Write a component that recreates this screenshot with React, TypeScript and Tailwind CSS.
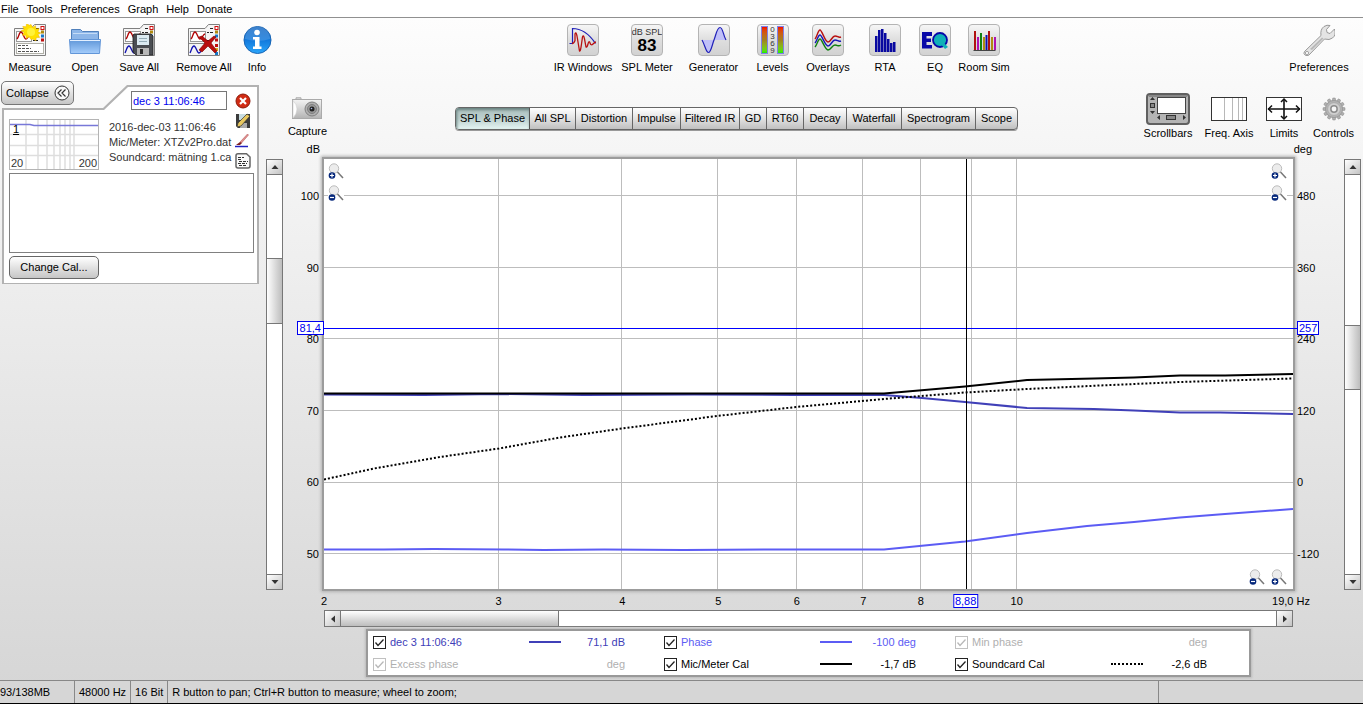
import React from "react";

type Kid = { children?: React.ReactNode };

/* ---------- toolbar icons ---------- */

function SheetArt() {
  return (
    <>
      <path d="M0.500 31.500V4.500H17L20.500 0.500H31.500V31.500Z" fill="#f6f6f6" stroke="#808080" />
      <rect x="2.500" y="7.500" width="15" height="10" fill="#fff" stroke="#999" />
      <path d="M3 15C5 13 5 8 7 8s3 7 5 7 3-5 5-5" fill="none" stroke="#b00000" strokeWidth="1.300" />
      <path d="M22 4.500h3M19 8.500h2M22 8.500h3M19 16.500h5" stroke="#222" />
      <rect x="27" y="2.500" width="3" height="3" fill="#fff" stroke="#d01010" />
      <rect x="27" y="6.500" width="3" height="3" fill="#b08a10" />
      <rect x="27" y="10.500" width="3" height="3" fill="#1878c8" />
      <rect x="27" y="14.500" width="3" height="3" fill="#c01010" />
    </>
  );
}

function TwoSheetArt() {
  return (
    <>
      <SheetArt />
      <rect x="2" y="18" width="29" height="13" fill="#f4f4f4" />
      <path d="M1 19.500h18" stroke="#888" />
      <path d="M2 29C4 25 4 22 6 22s3 7 5 7 3-5 5-6" fill="none" stroke="#1010b0" strokeWidth="1.300" />
      <rect x="27" y="20" width="3" height="3" fill="#c01010" />
      <rect x="27" y="24" width="3" height="3" fill="#d8b020" />
      <rect x="27" y="28" width="3" height="3" fill="#1878c8" />
    </>
  );
}

const svg32 = "block h-8 w-8";

function MeasureIcon() {
  return (
    <svg className={svg32} viewBox="0 0 32 32">
      <SheetArt />
      <rect x="2.500" y="19.500" width="27" height="10" fill="#fff" stroke="#b0b0a8" />
      <path d="M4 21.500h10M4 24.500h13M4 27.500h21" stroke="#555" strokeDasharray="3 1" />
      <path
        d="M17 0.500l1.700 3 2.800-1.800.3 3.300 3.400-.3-1.400 3 3 1.300-2.900 1.500 1.700 2.900-3.400 0-.3 3.300-3-1.700L17 15.500l-1.800-2.700-3 1.700-.3-3.300-3.400 0 1.600-2.900-2.900-1.500 3-1.300-1.400-3 3.400.3.3-3.300 2.800 1.800z"
        fill="#ffe000"
        stroke="#f2b800"
        strokeWidth=".6"
      />
      <circle cx="17" cy="8" r="4" fill="#fff23a" />
    </svg>
  );
}

function OpenIcon() {
  return (
    <svg className={svg32} viewBox="0 0 32 32">
      <defs>
        <linearGradient id="folderFront" x1="0" y1="0" x2="0" y2="1">
          <stop offset="0" stopColor="#5f96d8" />
          <stop offset="1" stopColor="#a5cdfb" />
        </linearGradient>
      </defs>
      <path d="M2.500 18V5.500h9l2 2h16V18z" fill="#8db6e8" stroke="#5080bb" />
      <path d="M4 9.500h24" stroke="#c5dcf6" />
      <path d="M0.500 15.500h31L30.500 29.500H1.500z" fill="url(#folderFront)" stroke="#6296d8" />
      <path d="M1 16.500h30" stroke="#e4f0ff" />
    </svg>
  );
}

function SaveAllIcon() {
  return (
    <svg className={svg32} viewBox="0 0 32 32">
      <TwoSheetArt />
      <path d="M11 10h17l2 2v19H13l-3-3V11z" fill="#4a4d52" stroke="#222" strokeWidth=".8" />
      <rect x="14" y="11" width="12" height="10" fill="#dcebf2" />
      <path d="M16 14.500h8M16 17.500h8" stroke="#95adb8" />
      <rect x="14" y="24" width="12" height="7" fill="#b8b8b8" />
      <rect x="17" y="25" width="3" height="5" fill="#2c2c2c" />
    </svg>
  );
}

function RemoveAllIcon() {
  return (
    <svg className={svg32} viewBox="0 0 32 32">
      <TwoSheetArt />
      <path d="M11 13l3-1 6 5 6-5 2 1-5 6 6 8-2 2-7-7-6 6-3-2 6-7z" fill="#b80d0d" stroke="#7c0000" strokeWidth=".6" />
    </svg>
  );
}

function InfoIcon() {
  return (
    <svg className={svg32} viewBox="0 0 32 32">
      <defs>
        <linearGradient id="infoBall" x1="0" y1="0" x2="0" y2="1">
          <stop offset="0" stopColor="#1c6cc4" />
          <stop offset=".5" stopColor="#1279dc" />
          <stop offset="1" stopColor="#2ba6fa" />
        </linearGradient>
      </defs>
      <circle cx="16.500" cy="16" r="13.500" fill="url(#infoBall)" stroke="#1764b4" />
      <path d="M4 15a12 12 0 0 1 25 0q-12 4-25 0z" fill="#fff" opacity=".15" />
      <circle cx="16" cy="8.500" r="2.800" fill="#fff" />
      <path d="M12 13h6.500v9.500h2V25H12v-2.500h2v-7h-2z" fill="#fff" />
    </svg>
  );
}

function Tile({ children }: Kid) {
  return (
    <span className="flex h-8 w-8 flex-col items-center justify-center overflow-hidden rounded-[4px] border border-[#b4b4b4] bg-linear-to-b from-[#f6f6f6] via-[#dedede] to-[#d2d2d2]">
      {children}
    </span>
  );
}

const tileSvg = "block h-[30px] w-[30px]";

function IrIcon() {
  return (
    <Tile>
      <svg className={tileSvg} viewBox="0 0 30 30" fill="none">
        <path d="M1.500 18.500h3V3.500q13 0 23 15" stroke="#2020b8" strokeWidth="1.200" />
        <path d="M4 18.500q2 0 3-3V9q1-3 2 2l2.500 15q1 1 2-7l1-7q1-3 2 2l1.500 8q1 1 2-3t2-1 3 1 3-2" stroke="#b81010" strokeWidth="1.300" />
      </svg>
    </Tile>
  );
}

function SplIcon() {
  return (
    <Tile>
      <span className="text-[9px] leading-[10px] whitespace-nowrap text-[#333]">dB SPL</span>
      <span className="text-[17px] leading-[17px] font-bold text-black">83</span>
    </Tile>
  );
}

function GeneratorIcon() {
  return (
    <Tile>
      <svg className={tileSvg} viewBox="0 0 30 30">
        <path d="M3 15C6 20 7 27.500 9.500 27.500S13 20 15 15S18 2.500 21 2.500S24 10 27 15z" fill="#c0c0f8" />
        <path d="M3 15C6 20 7 27.500 9.500 27.500S13 20 15 15S18 2.500 21 2.500S24 10 27 15" fill="none" stroke="#2020b8" strokeWidth="1.200" />
      </svg>
    </Tile>
  );
}

const bar = "w-[7px] border border-[#8080e8] bg-linear-to-b from-[#f00000] via-[#a08020] to-[#00f000]";

function LevelsIcon() {
  return (
    <Tile>
      <span className="flex h-[28px] w-[23px] justify-between">
        <span className={bar} />
        <span className="flex flex-col items-center text-[8px] leading-[7px] text-[#333]">
          <span>0</span>
          <span>3</span>
          <span>6</span>
          <span>9</span>
        </span>
        <span className={bar} />
      </span>
    </Tile>
  );
}

function OverlaysIcon() {
  return (
    <Tile>
      <svg className={tileSvg} viewBox="0 0 30 30" fill="none" strokeWidth="1.400">
        <path d="M2 14C4 12 5 5 7 5s5 12 8 12 4-6 7-6 3 2 6 1" stroke="#b81010" />
        <path d="M2 18C4 16 5 10 7 10s5 11 8 11 4-6 7-6 3 2 6 1" stroke="#1818b8" />
        <path d="M2 22C4 20 5 14 7 14s5 11 8 11 4-5 7-5 3 2 6 0" stroke="#108010" />
      </svg>
    </Tile>
  );
}

function RtaIcon() {
  return (
    <Tile>
      <svg className={tileSvg} viewBox="0 0 30 30">
        <path
          d="M5 27V11h2.500v16zM8 27V5h2.500v22zM11 27V4h2.500v23zM14 27V8h2.500v19zM17 27V14h2.500v13zM20 27V18h2.500v9zM23 27V17h2.500v10z"
          fill="#0808a0"
        />
      </svg>
    </Tile>
  );
}

function EqIcon() {
  return (
    <Tile>
      <svg className={tileSvg} viewBox="0 0 30 30">
        <path d="M2 7h10v4H6.500v2.500H11v3.500H6.500V20H12v3.500H2z" fill="#0808a8" />
        <circle cx="20" cy="15" r="7" fill="#10b0b8" stroke="#0808a8" strokeWidth="1.800" />
        <path d="M20 18l3-1 5 5-3 2z" fill="#10b0b8" />
      </svg>
    </Tile>
  );
}

function RoomIcon() {
  return (
    <Tile>
      <svg className={tileSvg} viewBox="0 0 30 30">
        <path d="M5 25V6h2v19zM19 25V6h2v19z" fill="#b01010" />
        <path d="M8 25V12h2v13zM25 25V12h2v13z" fill="#b010b0" />
        <path d="M11 25V8h2v17z" fill="#108010" />
        <path d="M14 25V12h2v13zM22 25V12h2v13z" fill="#b08a10" />
        <path d="M16.500 25V10h2v15z" fill="#1010b0" />
        <path d="M4.500 25.500h22" stroke="#444" />
      </svg>
    </Tile>
  );
}

function WrenchIcon() {
  return (
    <svg className={svg32} viewBox="0 0 32 32">
      <path
        d="M1.500 27.500L18 11.500q-1-6 3-9 3-2 6-1l-3.500 4 .5 3 3 1L31.500 5q2 6-2 9-3 2.500-8 1L6 31q-2 1.500-4 0t-.5-3.500z"
        fill="#e4e4e4"
        stroke="#909090"
        strokeWidth=".9"
      />
      <path d="M7 25L19 13.500l1.500 1L9 26z" fill="#b8b8b8" />
      <circle cx="4" cy="29" r="1.600" fill="#fff" stroke="#909090" strokeWidth=".8" />
    </svg>
  );
}

function Tool({ label, width, children }: Kid & { label: string; width: string }) {
  return (
    <button type="button" className={`flex flex-col items-center gap-1 whitespace-nowrap ${width}`}>
      {children}
      <span className="leading-[14px]">{label}</span>
    </button>
  );
}

/* ---------- scroll bars ---------- */

const grip = "flex shrink-0 items-center justify-center bg-linear-to-br from-white to-[#c4c4c4]";

function Arrow({ d }: { d: string }) {
  return (
    <svg className="block h-[8px] w-[8px]" viewBox="0 0 8 8">
      <path d={d} fill="#333" />
    </svg>
  );
}

function VScroll({ before, after }: { before: number; after: number }) {
  return (
    <div className="flex w-[17px] flex-1 flex-col border border-[#777] bg-white">
      <button type="button" aria-label="Scroll up" className={`${grip} h-[15px] border-b border-[#777]`}>
        <Arrow d="M0.500 6L4 2l3.500 4z" />
      </button>
      <div className="flex flex-1 flex-col">
        <div className="basis-0" style={{ flexGrow: before }} />
        <div className="basis-0 border-y border-[#777] bg-linear-to-r from-white to-[#bdbdbd]" style={{ flexGrow: 64 }} />
        <div className="basis-0" style={{ flexGrow: after }} />
      </div>
      <button type="button" aria-label="Scroll down" className={`${grip} h-[15px] border-t border-[#777]`}>
        <Arrow d="M0.500 2L4 6l3.500-4z" />
      </button>
    </div>
  );
}

function HScroll() {
  return (
    <div className="flex h-[17px] border border-[#777] bg-white">
      <button type="button" aria-label="Scroll left" className={`${grip} w-[16px] border-r border-[#777]`}>
        <Arrow d="M6 0.500L2 4l4 3.500z" />
      </button>
      <div className="flex flex-1">
        <div className="w-[23.300%] border-r border-[#777] bg-linear-to-b from-white to-[#bdbdbd]" />
      </div>
      <button type="button" aria-label="Scroll right" className={`${grip} w-[16px] border-l border-[#777]`}>
        <Arrow d="M2 0.500L6 4 2 7.500z" />
      </button>
    </div>
  );
}

/* ---------- measurement panel ---------- */

function Thumb() {
  return (
    <div className="relative h-[51px] w-[90px] border border-[#b4b4b4] bg-white">
      <svg className="block h-full w-full" viewBox="0 0 88 49" preserveAspectRatio="none">
        <path
          d="M16 0V49M28 0V49M37 0V49M44 0V49M50 0V49M55 0V49M60 0V49M64 0V49M0 14.500H88M0 25.500H88M0 35.500H88"
          stroke="#dedede"
          strokeWidth="1.500"
        />
        <path d="M0 4.500H20L24 5.500H88" fill="none" stroke="#7878d8" strokeWidth="1.500" />
      </svg>
      <span className="absolute top-[3px] left-[3px] leading-[12px] text-black underline">1</span>
      <span className="absolute bottom-0 left-px bg-white leading-[12px] text-[#333]">20</span>
      <span className="absolute right-px bottom-0 bg-white leading-[12px] text-[#333]">200</span>
    </div>
  );
}

const svg16 = "block h-4 w-4";

function Panel() {
  return (
    <section className="relative w-[260px] pb-[5px]">
      <div className="absolute top-[5px] right-px bottom-0 left-[2px] bg-[#b2b2b2] [clip-path:polygon(0_23px,101px_23px,125px_0,100%_0,100%_100%,0_100%)]" />
      <div className="absolute top-[7px] right-[3px] bottom-px left-[4px] bg-white [clip-path:polygon(0_23px,100px_23px,124px_0,100%_0,100%_100%,0_100%)]" />
      <div className="relative flex">
        <div className="w-[233px]">
          <div className="flex justify-between pt-px pr-[6px] pl-px">
            <button
              type="button"
              className="flex h-6 w-[73px] items-center gap-[5px] rounded-[5px] border border-[#777] bg-linear-to-b from-white to-[#c6c6c6] pl-1"
            >
              Collapse
              <svg className="h-4 w-4" viewBox="0 0 16 16" fill="none" stroke="#333">
                <circle cx="8" cy="8" r="7" fill="#f8f8f8" />
                <path d="M7.500 4.500L4 8l3.500 3.500M11.500 4.500L8 8l3.500 3.500" strokeWidth="1.200" />
              </svg>
            </button>
            <input
              aria-label="Measurement name"
              defaultValue="dec 3 11:06:46"
              className="mt-[10px] h-[19px] w-24 border border-[#777] bg-white px-px text-[#0000f0] outline-none"
            />
          </div>
          <div className="flex gap-[10px] pt-[9px] pl-[9px]">
            <Thumb />
            <div className="w-[124px] overflow-hidden pt-px leading-[15px] whitespace-nowrap text-[#333]">
              <p>2016-dec-03 11:06:46</p>
              <p>Mic/Meter: XTZv2Pro.dat</p>
              <p>Soundcard: mätning 1.ca</p>
            </div>
          </div>
        </div>
        <div className="flex flex-col gap-1 pt-[13px] pl-0.5">
          <button type="button" aria-label="Remove">
            <svg className={svg16} viewBox="0 0 16 16">
              <circle cx="8" cy="8" r="7" fill="#d02c14" stroke="#8e1a0a" />
              <path d="M5 5l6 6M11 5l-6 6" stroke="#fff" strokeWidth="2.200" />
            </svg>
          </button>
          <button type="button" aria-label="Save as">
            <svg className={svg16} viewBox="0 0 16 16">
              <path d="M1 1h14v14H3l-2-2z" fill="#3c3c3c" />
              <path d="M4 1h7v6H4z" fill="#c8dce0" />
              <path d="M5 10h7v5H5z" fill="#aaa" />
              <path d="M2 14l1-4 9-9 3 2-9 10z" fill="#e8c860" stroke="#333" strokeWidth=".7" />
            </svg>
          </button>
          <button type="button" aria-label="Trace colour">
            <svg className={svg16} viewBox="0 0 16 16">
              <path d="M5 9L12.500 1l1 1-7 8z" fill="#e09090" stroke="#b86060" strokeWidth=".6" />
              <path d="M1 12l4-3 2 1-2 2z" fill="#802020" />
              <path d="M0 13.500h13" stroke="#2020c0" strokeWidth="1.500" />
            </svg>
          </button>
          <button type="button" aria-label="Notes">
            <svg className={svg16} viewBox="0 0 16 16">
              <path d="M3 .8h8.500L15 4v9q0 2-2 2H3q-2 0-2-2V2.800q0-2 2-2z" fill="#fafafa" stroke="#666" strokeWidth="1.500" />
              <path d="M3 4.500h6M3 6.500h4M4 8.500h9M3 10.500h9M4 12.500h8" stroke="#333" strokeDasharray="3 1" />
            </svg>
          </button>
        </div>
      </div>
      <div className="relative pt-[3px] pr-[6px] pl-[9px]">
        <textarea aria-label="Notes" className="block h-20 w-full resize-none border border-[#808080] bg-white outline-none" />
        <button
          type="button"
          className="mt-[3px] h-[23px] w-[90px] rounded-[5px] border border-[#666] bg-linear-to-b from-white to-[#c6c6c6]"
        >
          Change Cal...
        </button>
      </div>
    </section>
  );
}

/* ---------- graph header ---------- */

const tabs = [
  { name: "SPL & Phase", width: "w-[74px]" },
  { name: "All SPL", width: "w-[46px]" },
  { name: "Distortion", width: "w-[57px]" },
  { name: "Impulse", width: "w-[48px]" },
  { name: "Filtered IR", width: "w-[59px]" },
  { name: "GD", width: "w-[27px]" },
  { name: "RT60", width: "w-[37px]" },
  { name: "Decay", width: "w-[43px]" },
  { name: "Waterfall", width: "w-[55px]" },
  { name: "Spectrogram", width: "w-[74px]" },
  { name: "Scope", width: "w-[41px]" },
];

function Tabs() {
  return (
    <nav className="mt-[27px] flex h-[23px] overflow-hidden rounded-[4px] border border-[#666] bg-linear-to-b from-white via-[#e2e2e2] to-[#c0c0c0] shadow-[0_1px_0_#999]">
      {tabs.map((t, i) => (
        <button
          key={t.name}
          type="button"
          className={`border-r whitespace-nowrap ${t.width} ${
            i === 0
              ? "border-[#555] bg-linear-to-b from-[#aec0bf] via-[#bccfce] to-[#e4f4f2] shadow-[inset_1px_2px_3px_#66807e]"
              : "border-[#666] last:border-r-0"
          }`}
        >
          {t.name}
        </button>
      ))}
    </nav>
  );
}

function CameraIcon() {
  return (
    <svg className="block h-6 w-8" viewBox="0 0 32 24">
      <defs>
        <linearGradient id="camBody" x1="0" y1="0" x2="0" y2="1">
          <stop offset="0" stopColor="#f4f4f4" />
          <stop offset="1" stopColor="#b4b4b4" />
        </linearGradient>
      </defs>
      <path d="M5 2.500V.8h5v1.700" fill="#ddd" stroke="#aaa" />
      <rect x="1.500" y="2.500" width="29" height="19" fill="url(#camBody)" stroke="#aaa" />
      <path d="M2 3.500q4 4 4 8.500t-4 9z" fill="#fff" stroke="#ccc" strokeWidth=".6" />
      <circle cx="21" cy="12" r="7" fill="#b0b0b0" stroke="#808080" />
      <circle cx="21" cy="12" r="4.500" fill="#989898" stroke="#808080" />
      <circle cx="21" cy="12" r="2.500" fill="#222" />
      <circle cx="20.500" cy="11.500" r=".8" fill="#a8b8e8" />
    </svg>
  );
}

function ScrollbarsIcon() {
  return (
    <svg className="block h-8 w-11" viewBox="0 0 44 32">
      <rect x="1" y="1" width="42" height="30" rx="3" fill="#b4b4b4" stroke="#606060" strokeWidth="2" />
      <path d="M3 3h38" stroke="#888" strokeWidth="2" />
      <rect x="11.500" y="4.500" width="28" height="16" fill="#fff" stroke="#444" />
      <path d="M4 7l2.500-3L9 7zM4 18l2.500 3L9 18zM14 22v5l-3-2.500zM37 22v5l3-2.500z" fill="#333" />
      <rect x="4.500" y="10.500" width="4" height="4" fill="#888" stroke="#333" />
      <rect x="20.500" y="22.500" width="9" height="4" fill="#888" stroke="#333" />
    </svg>
  );
}

function FreqIcon() {
  return (
    <svg className="block h-8 w-9" viewBox="0 0 36 32">
      <rect x=".5" y="4.500" width="35" height="23" fill="#fff" stroke="#333" />
      <path d="M13.500 5v22M21.500 5v22M27.500 5v22M31.500 5v22" stroke="#b8b8b8" />
    </svg>
  );
}

function LimitsIcon() {
  return (
    <svg className="block h-8 w-9" viewBox="0 0 36 32" fill="none" stroke="#111">
      <rect x=".5" y="4.500" width="35" height="23" fill="#fff" stroke="#333" />
      <path d="M2 16h32M18 6v20" strokeWidth="1.600" />
      <path d="M6 12.500L2.500 16 6 19.500M30 12.500l3.500 3.500-3.500 3.500M15 9l3-3 3 3M15 23l3 3 3-3" strokeWidth="1.500" />
    </svg>
  );
}

function GearIcon() {
  const teeth = Array.from({ length: 12 }, (_, i) => i * 30);
  return (
    <svg className="block h-8 w-6" viewBox="0 0 24 32">
      <g transform="translate(12 16)">
        {teeth.map((a) => (
          <path key={a} d="M-1.800 -8L-1.200 -11H1.200L1.800 -8z" fill="#b0b0b0" stroke="#888" strokeWidth=".5" transform={`rotate(${a})`} />
        ))}
        <circle r="8.500" fill="#b4b4b4" stroke="#909090" strokeWidth=".6" />
        <circle r="6.300" fill="#d0d0d0" stroke="#a0a0a0" strokeWidth=".6" />
        <circle r="3.900" fill="#8c8c8c" />
        <circle r="2.400" fill="#f6f6f6" />
      </g>
    </svg>
  );
}

function ViewButton({ label, width, children }: Kid & { label: string; width: string }) {
  return (
    <button type="button" className={`flex flex-col items-center gap-px pt-[13px] whitespace-nowrap ${width}`}>
      {children}
      <span className="leading-[14px]">{label}</span>
    </button>
  );
}

/* ---------- plot ---------- */

const F_MIN = 2;
const F_MAX = 19;
const pos = (f: number) => (Math.log(f / F_MIN) / Math.log(F_MAX / F_MIN)) * 100;

function ZoomButton({ plus }: { plus?: boolean }) {
  return (
    <button type="button" aria-label={plus ? "Zoom in" : "Zoom out"} className="block bg-white">
      <svg className={svg16} viewBox="0 0 16 16">
        <circle cx="6" cy="5.500" r="4.700" fill="#ececec" stroke="#bcbcbc" />
        <path d="M9.500 9l5.500 6" stroke="#777" strokeWidth="1.500" />
        <circle cx="4" cy="12.500" r="3.300" fill="#06287c" />
        <path d={plus ? "M2 12.500h4M4 10.500v4" : "M2 12.500h4"} stroke="#fff" strokeWidth="1.200" />
      </svg>
    </button>
  );
}

const line = { fill: "none", vectorEffect: "non-scaling-stroke" as const, strokeWidth: 2 };

function Plot() {
  return (
    <div className="relative min-h-[300px] flex-1 bg-white shadow-[0_0_0_2px_#9c9c9c,0_0_3px_3px_#b0b0b0]">
      <svg className="absolute inset-0 h-full w-full" viewBox="0 0 969 430" preserveAspectRatio="none">
        <g stroke="#bdbdbd" fill="none" shapeRendering="crispEdges">
          <path
            d="M0 36.500H969M0 108.500H969M0 179.500H969M0 251.500H969M0 323.500H969M0 394.500H969M174.500 0V430M297.500 0V430M393.500 0V430M472.500 0V430M538.500 0V430M596.500 0V430M647.500 0V430M692.500 0V430"
            vectorEffect="non-scaling-stroke"
          />
        </g>
        <path {...line} stroke="#4040b8" d="M0 235.500L100 236L175 235L260 236L370 235.500L470 236L560 236L598 239L641 243L703 249L770 250L810 251.500L856 253.500H896L969 255" />
        <path {...line} stroke="#5c5cf4" d="M0 390.500H60L110 390L180 390.500L220 391L280 390.500L360 391L450 390.500H560L641 382.500L703 374L763 367L810 363L856 358.500L901 355L969 350" />
        <path {...line} stroke="#000" d="M0 234.500H560L641 227.500L703 221L770 219.500L810 218.500L856 216.500H901L969 215" />
        <path {...line} stroke="#000" strokeDasharray="2 2" d="M0 320.500L50 309.500L116 298L175 289.500L236 278.500L298 269.500L393 257L472 248L560 240L641 233.500L703 230L776 226.500L856 223L969 219.500" />
      </svg>
      <div className="absolute top-[39.300%] -right-1 left-0 border-t border-[#0000ff]" />
      <div className="absolute inset-y-0 border-l border-black" style={{ left: `${pos(8.88)}%` }} />
      <div className="absolute top-1 left-1 flex flex-col gap-[6px]">
        <ZoomButton plus />
        <ZoomButton />
      </div>
      <div className="absolute top-1 right-[6px] flex flex-col gap-[6px]">
        <ZoomButton plus />
        <ZoomButton />
      </div>
      <div className="absolute right-[6px] bottom-1 flex gap-[6px]">
        <ZoomButton />
        <ZoomButton plus />
      </div>
      <span className="absolute top-[39.300%] right-full flex h-[14px] -translate-y-1/2 items-center border border-[#0000f0] bg-white px-0.5 text-[#0000f0]">
        81,4
      </span>
      <span className="absolute top-[39.300%] left-full ml-1 flex h-[14px] -translate-y-1/2 items-center border border-[#0000f0] bg-white px-px text-[#0000f0]">
        257
      </span>
    </div>
  );
}

function YAxis({ values, side }: { values: string[]; side: string }) {
  return (
    <div className={`flex flex-col justify-between pt-[30px] pb-[29px] leading-[14px] ${side}`}>
      {values.map((v) => (
        <span key={v}>{v}</span>
      ))}
    </div>
  );
}

function XAxis() {
  return (
    <div className="relative h-[21px] leading-[14px]">
      {[2, 3, 4, 5, 6, 7, 8, 10].map((f) => (
        <span key={f} className="absolute top-[5px] -translate-x-1/2" style={{ left: `${pos(f)}%` }}>
          {f}
        </span>
      ))}
      <span
        className="absolute top-[5px] flex h-[14px] -translate-x-1/2 items-center border border-[#0000f0] bg-white px-px text-[#0000f0]"
        style={{ left: `${pos(8.88)}%` }}
      >
        8,88
      </span>
      <span className="absolute top-[5px] -right-[17px]">19,0 Hz</span>
    </div>
  );
}

/* ---------- legend ---------- */

type Trace = { name: string; value: string; text: string; stroke?: string; off?: boolean };

const traces: Trace[] = [
  { name: "dec 3 11:06:46", value: "71,1 dB", text: "text-[#4040b8]", stroke: "border-t-2 border-solid border-[#4040b8]" },
  { name: "Phase", value: "-100 deg", text: "text-[#5c5cf4]", stroke: "border-t-2 border-solid border-[#5c5cf4]" },
  { name: "Min phase", value: "deg", text: "text-[#b0b0b0]", off: true },
  { name: "Excess phase", value: "deg", text: "text-[#b0b0b0]", off: true },
  { name: "Mic/Meter Cal", value: "-1,7 dB", text: "text-black", stroke: "border-t-2 border-solid border-black" },
  { name: "Soundcard Cal", value: "-2,6 dB", text: "text-black", stroke: "border-t-2 border-dotted border-black" },
];

function Legend() {
  return (
    <div className="mx-auto grid w-full max-w-[881px] grid-cols-3 bg-white pr-[3px] pl-[5px] shadow-[0_0_0_2px_#999,0_0_2px_3px_#bbb]">
      {traces.map((t) => (
        <div key={t.name} className={`flex h-[22px] items-center ${t.text}`}>
          <label className="flex w-[156px] items-center gap-1">
            <span className="relative h-[13px] w-[13px]">
              <input
                type="checkbox"
                defaultChecked
                disabled={t.off}
                className="peer block h-[13px] w-[13px] appearance-none border border-[#222] bg-white disabled:border-[#c0c0c0]"
              />
              <svg
                className={`pointer-events-none absolute inset-0 hidden h-[13px] w-[13px] peer-checked:block ${t.off ? "text-[#b8b8b8]" : "text-[#222]"}`}
                viewBox="0 0 13 13"
                fill="none"
                stroke="currentColor"
                strokeWidth="1.300"
              >
                <path d="M2.500 6.500L5 9.500l5.500-6" />
              </svg>
            </span>
            {t.name}
          </label>
          <span className={`w-8 ${t.stroke ?? ""}`} />
          <span className="w-16 text-right">{t.value}</span>
        </div>
      ))}
    </div>
  );
}

/* ---------- page ---------- */

const menus = ["File", "Tools", "Preferences", "Graph", "Help", "Donate"];

export default function App() {
  return (
    <div className="flex min-h-screen flex-col bg-linear-to-b from-[#fefefe] to-[#d5d5d5] font-['Liberation_Sans',Arial,sans-serif] text-[11px] text-black">
      <nav className="flex h-[18px] items-center gap-2 border-b border-[#909090] bg-white pl-px">
        {menus.map((m) => (
          <button key={m} type="button" className="leading-[14px]">
            {m}
          </button>
        ))}
      </nav>

      <header className="flex justify-between pt-[6px] pr-[10px] pb-[6px]">
        <div className="flex">
          <Tool label="Measure" width="w-[60px]"><MeasureIcon /></Tool>
          <Tool label="Open" width="w-[50px]"><OpenIcon /></Tool>
          <Tool label="Save All" width="w-[58px]"><SaveAllIcon /></Tool>
          <Tool label="Remove All" width="w-[72px]"><RemoveAllIcon /></Tool>
          <Tool label="Info" width="w-[34px]"><InfoIcon /></Tool>
        </div>
        <div className="flex pl-[3px]">
          <Tool label="IR Windows" width="w-[62px]"><IrIcon /></Tool>
          <Tool label="SPL Meter" width="w-[66px]"><SplIcon /></Tool>
          <Tool label="Generator" width="w-[67px]"><GeneratorIcon /></Tool>
          <Tool label="Levels" width="w-[51px]"><LevelsIcon /></Tool>
          <Tool label="Overlays" width="w-[60px]"><OverlaysIcon /></Tool>
          <Tool label="RTA" width="w-[54px]"><RtaIcon /></Tool>
          <Tool label="EQ" width="w-[46px]"><EqIcon /></Tool>
          <Tool label="Room Sim" width="w-[52px]"><RoomIcon /></Tool>
        </div>
        <Tool label="Preferences" width="w-[68px]"><WrenchIcon /></Tool>
      </header>

      <main className="flex flex-1">
        <aside className="flex shrink-0 gap-[6px]">
          <div>
            <Panel />
          </div>
          <div className="flex flex-col pt-[79px] pb-[90px]">
            <VScroll before={83} after={250} />
          </div>
        </aside>

        <div className="flex min-w-0 flex-1 flex-col">
          <div className="flex h-[79px] justify-between pr-px">
            <div className="flex w-[49px] flex-col items-center pt-[17px]">
              <button type="button" className="flex flex-col items-center gap-[3px]">
                <CameraIcon />
                <span className="leading-[14px]">Capture</span>
              </button>
              <span className="self-end pt-1 pr-3 leading-[14px]">dB</span>
            </div>
            <Tabs />
            <div className="flex flex-col">
              <div className="flex">
                <ViewButton label="Scrollbars" width="w-[54px]"><ScrollbarsIcon /></ViewButton>
                <ViewButton label="Freq. Axis" width="w-[68px]"><FreqIcon /></ViewButton>
                <ViewButton label="Limits" width="w-[42px]"><LimitsIcon /></ViewButton>
                <ViewButton label="Controls" width="w-[57px]"><GearIcon /></ViewButton>
              </div>
              <span className="self-end pt-0.5 pr-[50px] leading-[14px]">deg</span>
            </div>
          </div>

          <div className="flex flex-1">
            <div className="flex pb-[90px]">
              <YAxis values={["100", "90", "80", "70", "60", "50"]} side="w-[41px] items-end pr-[5px]" />
            </div>
            <div className="flex min-w-0 flex-1 flex-col pb-[5px]">
              <Plot />
              <XAxis />
              <HScroll />
              <div className="pt-1">
                <Legend />
              </div>
            </div>
            <div className="flex pb-[90px]">
              <YAxis values={["480", "360", "240", "120", "0", "-120"]} side="w-[51px] items-start pl-1" />
              <div className="flex">
                <VScroll before={150} after={184} />
              </div>
              <div className="w-[2px]" />
            </div>
          </div>
        </div>
      </main>

      <footer className="flex h-6 items-stretch border-t border-b border-t-[#888] border-b-black bg-[#d6d6d6] leading-[23px] whitespace-nowrap">
        <span className="w-[75px] border-r border-[#888]">93/138MB</span>
        <span className="border-r border-[#888] px-1">48000 Hz</span>
        <span className="border-r border-[#888] px-1">16 Bit</span>
        <span className="flex-1 border-r border-[#888] pl-1">R button to pan; Ctrl+R button to measure; wheel to zoom;</span>
        <span className="w-[204px]" />
      </footer>
    </div>
  );
}
